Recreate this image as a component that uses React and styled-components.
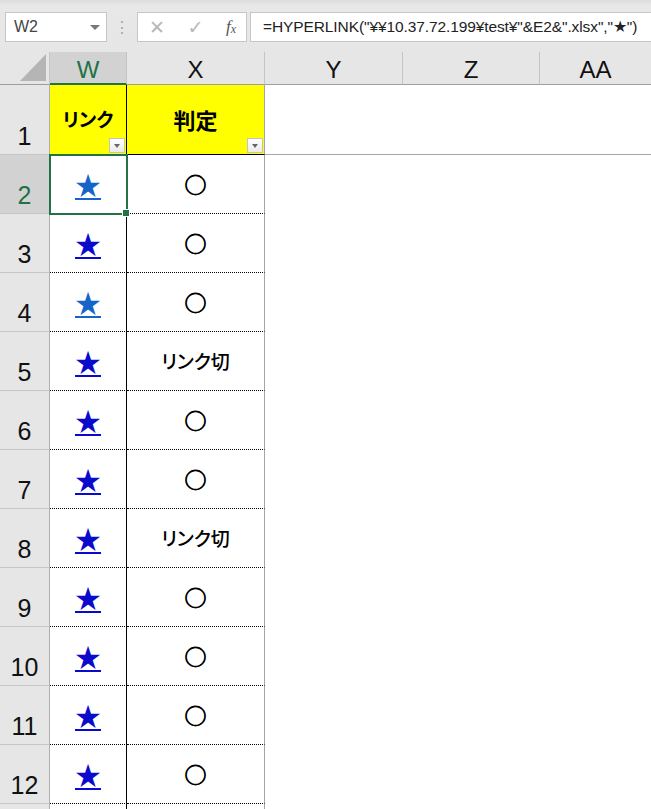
import styled, { createGlobalStyle } from "styled-components";

const GlobalStyle = createGlobalStyle`
  html, body {
    margin: 0;
    padding: 0;
    background: #fff;
    overflow: hidden;
  }
  * {
    box-sizing: border-box;
  }
`;

const GREEN = "#217346";
const JP = `"Noto Sans CJK JP", "Liberation Sans", sans-serif`;

const rows = [
  { n: 2, tone: "light", mark: "○", selected: true },
  { n: 3, tone: "dark", mark: "○" },
  { n: 4, tone: "light", mark: "○" },
  { n: 5, tone: "dark", mark: "リンク切" },
  { n: 6, tone: "dark", mark: "○" },
  { n: 7, tone: "dark", mark: "○" },
  { n: 8, tone: "dark", mark: "リンク切" },
  { n: 9, tone: "dark", mark: "○" },
  { n: 10, tone: "dark", mark: "○" },
  { n: 11, tone: "dark", mark: "○" },
  { n: 12, tone: "dark", mark: "○" },
];

const App = () => {
  return (
    <Page>
      <GlobalStyle />
      <Toolbar>
        <NameBox>
          <span>W2</span>
          <Caret />
        </NameBox>
        <Grip>⋮</Grip>
        <FxBox>
          <FxIcon>✕</FxIcon>
          <FxIcon>✓</FxIcon>
          <FxLabel>
            f<sub>x</sub>
          </FxLabel>
        </FxBox>
        <FormulaBox>=HYPERLINK("¥¥10.37.72.199¥test¥"&E2&".xlsx","★")</FormulaBox>
      </Toolbar>

      <Sheet>
        <Corner>
          <svg width="26" height="27" viewBox="0 0 26 27">
            <polygon points="26,0 26,27 0,27" fill="#b5b5b5" />
          </svg>
        </Corner>
        <ColHeader $selected>W</ColHeader>
        <ColHeader>X</ColHeader>
        <ColHeader>Y</ColHeader>
        <ColHeader>Z</ColHeader>
        <ColHeader $last>AA</ColHeader>

        <RowHeader>1</RowHeader>
        <TitleCell $divider>
          リンク
          <FilterButton>
            <Caret $small />
          </FilterButton>
        </TitleCell>
        <TitleCell $title>
          判定
          <FilterButton>
            <Caret $small />
          </FilterButton>
        </TitleCell>
        <BlankCell $ruled />

        {rows.map((r) => (
          <Row key={r.n} r={r} />
        ))}

        {/* row 13: only its top edge is on screen */}
        <RowHeader />
        <LinkCell />
        <MarkCell />
        <BlankCell />
      </Sheet>
    </Page>
  );
};

const Row = ({ r }) => (
  <>
    <RowHeader $selected={r.selected}>{r.n}</RowHeader>
    <LinkCell $selected={r.selected}>
      <StarLink $tone={r.tone}>★</StarLink>
      {r.selected && <FillHandle />}
    </LinkCell>
    <MarkCell>
      <Mark $text={r.mark.length > 1}>{r.mark}</Mark>
    </MarkCell>
    <BlankCell />
  </>
);

const Page = styled.div`
  width: 651px;
  height: 809px;
  overflow: hidden;
  font-family: "Liberation Sans", Arial, sans-serif;
`;

const Toolbar = styled.div`
  height: 52px;
  display: flex;
  align-items: flex-start;
  padding: 12px 0 0 5px;
  background: linear-gradient(#dcdcdc 0px, #e8e8e8 6px, #e6e6e6 100%);
`;

const Box = styled.div`
  height: 30px;
  background: #fff;
  border: 1px solid #c6c6c6;
  display: flex;
  align-items: center;
`;

const NameBox = styled(Box)`
  width: 102px;
  padding: 0 6px 0 8px;
  justify-content: space-between;
  font-size: 16px;
  color: #444;
`;

const Caret = styled.span`
  width: 0;
  height: 0;
  border-left: ${(p) => (p.$small ? 3.5 : 5)}px solid transparent;
  border-right: ${(p) => (p.$small ? 3.5 : 5)}px solid transparent;
  border-top: ${(p) => (p.$small ? 4 : 5)}px solid ${(p) => (p.$small ? "#666" : "#777")};
`;

const Grip = styled.div`
  width: 30px;
  height: 30px;
  display: flex;
  align-items: center;
  justify-content: center;
  color: #a9a9a9;
  font-size: 16px;
`;

const FxBox = styled(Box)`
  width: 110px;
  padding: 0 10px 0 11px;
  justify-content: space-between;
`;

const FxIcon = styled.span`
  font-family: "DejaVu Sans", sans-serif;
  font-size: 19px;
  color: #b8b8b8;
`;

const FxLabel = styled.span`
  font-family: "Liberation Serif", serif;
  font-style: italic;
  font-size: 17px;
  color: #555;
  sub {
    font-size: 12px;
    vertical-align: -1px;
  }
`;

const FormulaBox = styled(Box)`
  flex: 1;
  margin-left: 3px;
  border-right: none;
  padding-left: 12px;
  font-family: "Liberation Sans", Arial, sans-serif;
  font-size: 15.5px;
  letter-spacing: -0.1px;
  color: #222;
  white-space: nowrap;
  overflow: hidden;
`;

const Sheet = styled.div`
  display: grid;
  grid-template-columns: 50px 77px 138px 138px 137px 1fr;
  grid-template-rows: 33px 70px repeat(12, 59px);
`;

const Corner = styled.div`
  background: #e6e6e6;
  border-bottom: 1px solid #9e9e9e;
  border-right: 1px solid #c6c6c6;
  display: flex;
  align-items: flex-end;
  justify-content: flex-end;
  padding: 0 3px 3px 0;
`;

const ColHeader = styled.div`
  background: ${(p) => (p.$selected ? "#d2d2d2" : "#e6e6e6")};
  color: ${(p) => (p.$selected ? GREEN : "#111")};
  border-bottom: ${(p) => (p.$selected ? `2px solid ${GREEN}` : "1px solid #9e9e9e")};
  border-right: ${(p) => (p.$last ? "none" : "1px solid #c4c4c4")};
  display: flex;
  align-items: center;
  justify-content: center;
  padding-top: 4px;
  font-size: 24px;
`;

const RowHeader = styled.div`
  background: ${(p) => (p.$selected ? "#d2d2d2" : "#e6e6e6")};
  color: ${(p) => (p.$selected ? GREEN : "#111")};
  border-bottom: 1px solid #c6c6c6;
  border-right: 1px solid #b0b0b0;
  display: flex;
  align-items: flex-end;
  justify-content: center;
  font-size: 25px;
  line-height: 1;
  padding-bottom: 5px;
`;

const Cell = styled.div`
  position: relative;
  display: flex;
  align-items: center;
  justify-content: center;
  background: #fff;
`;

const TitleCell = styled(Cell)`
  background: #ffff00;
  border-bottom: 1px solid #000;
  border-right: 1px solid ${(p) => (p.$divider ? "#000" : "#a6a6a6")};
  font-family: ${JP};
  font-feature-settings: "palt";
  font-weight: 700;
  font-size: ${(p) => (p.$title ? 22 : 19)}px;
  color: #000;
  padding-bottom: 2px;
`;

const FilterButton = styled.div`
  position: absolute;
  right: 1px;
  bottom: 1px;
  width: 16px;
  height: 15px;
  border: 1px solid #c3c3c3;
  background: linear-gradient(#fff, #eaeaea);
  display: flex;
  align-items: center;
  justify-content: center;
`;

const BlankCell = styled.div`
  grid-column: span 3;
  background: #fff;
  border-bottom: ${(p) => (p.$ruled ? "1px solid #a6a6a6" : "none")};
`;

const LinkCell = styled(Cell)`
  border-right: 1px solid #000;
  border-bottom: 1px dotted #000;
  outline: ${(p) => (p.$selected ? `2px solid ${GREEN}` : "none")};
  outline-offset: -1px;
  z-index: ${(p) => (p.$selected ? 1 : 0)};
`;

const FillHandle = styled.span`
  position: absolute;
  right: -4px;
  bottom: -4px;
  width: 6px;
  height: 6px;
  background: ${GREEN};
  border: 1px solid #fff;
  box-sizing: content-box;
`;

const StarLink = styled.a`
  font-family: ${JP};
  font-size: 26px;
  line-height: 1;
  color: ${(p) => (p.$tone === "light" ? "#1565c8" : "#0a0acc")};
  text-decoration: underline;
  text-decoration-thickness: 2px;
  text-underline-offset: 3px;
  cursor: pointer;
`;

const MarkCell = styled(Cell)`
  border-right: 1px solid #a6a6a6;
  border-bottom: 1px dotted #000;
`;

const Mark = styled.span`
  font-family: ${JP};
  font-feature-settings: "palt";
  font-weight: ${(p) => (p.$text ? 500 : 400)};
  font-size: ${(p) => (p.$text ? 19 : 22)}px;
  -webkit-text-stroke: ${(p) => (p.$text ? "0" : "0.8px #000")};
  color: #000;
  line-height: 1;
  padding-bottom: ${(p) => (p.$text ? 2 : 3)}px;
`;

export default App;
